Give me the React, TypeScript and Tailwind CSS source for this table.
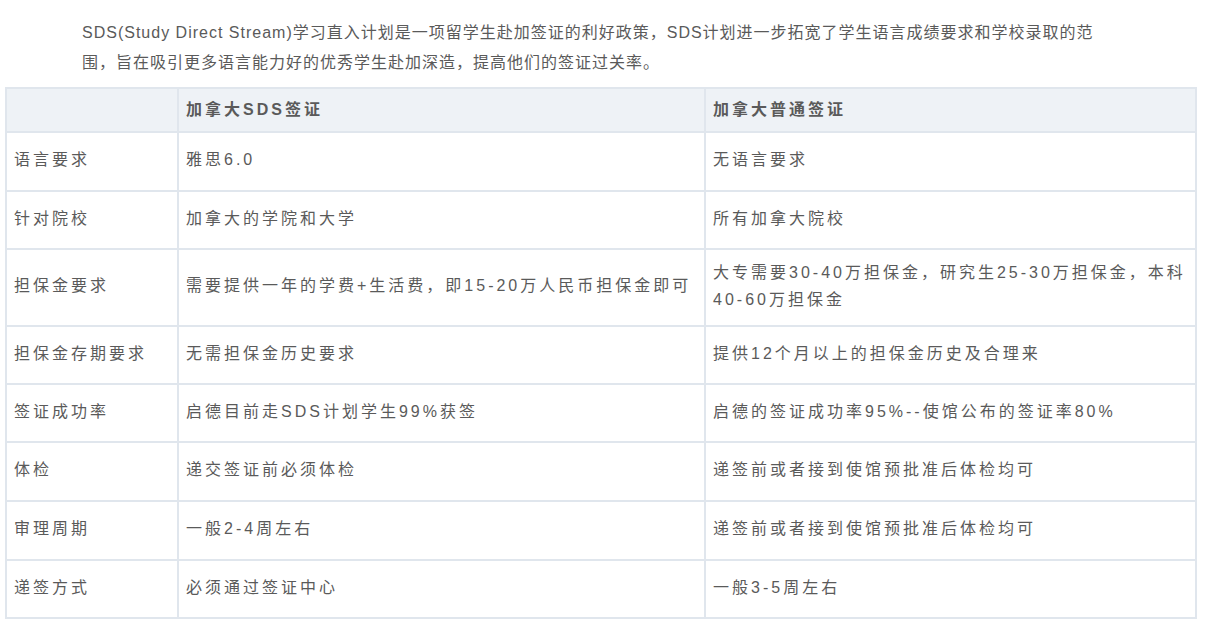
const rows: { label: string; sds: string; normal: string; h: string }[] = [
  { label: '语言要求', sds: '雅思6.0', normal: '无语言要求', h: 'h-[59px]' },
  { label: '针对院校', sds: '加拿大的学院和大学', normal: '所有加拿大院校', h: 'h-[58px]' },
  {
    label: '担保金要求',
    sds: '需要提供一年的学费+生活费，即15-20万人民币担保金即可',
    normal: '大专需要30-40万担保金，研究生25-30万担保金，本科40-60万担保金',
    h: 'h-[77px]',
  },
  { label: '担保金存期要求', sds: '无需担保金历史要求', normal: '提供12个月以上的担保金历史及合理来', h: 'h-[58px]' },
  { label: '签证成功率', sds: '启德目前走SDS计划学生99%获签', normal: '启德的签证成功率95%--使馆公布的签证率80%', h: 'h-[58px]' },
  { label: '体检', sds: '递交签证前必须体检', normal: '递签前或者接到使馆预批准后体检均可', h: 'h-[59px]' },
  { label: '审理周期', sds: '一般2-4周左右', normal: '递签前或者接到使馆预批准后体检均可', h: 'h-[59px]' },
  { label: '递签方式', sds: '必须通过签证中心', normal: '一般3-5周左右', h: 'h-[58px]' },
];

const cell = 'border-2 border-[#e0e6ed] px-[7px] pb-1 align-middle leading-[27px]';

export default function App() {
  return (
    <div className="min-h-screen w-[1205px] bg-white text-[#5a5a5a] font-['Liberation_Sans','Noto_Sans_CJK_SC',sans-serif] text-[16px]">
      <p className="ml-[82px] w-[1020px] pt-[18px] leading-[30px] tracking-[1px]">
        SDS(Study Direct Stream)学习直入计划是一项留学生赴加签证的利好政策，SDS计划进一步拓宽了学生语言成绩要求和学校录取的范围，旨在吸引更多语言能力好的优秀学生赴加深造，提高他们的签证过关率。
      </p>
      <table className="ml-[5px] mt-[9px] w-[1192px] border-collapse table-fixed tracking-[3px]">
        <colgroup>
          <col className="w-[172px]" />
          <col className="w-[527px]" />
          <col />
        </colgroup>
        <thead>
          <tr className="h-[44px] bg-[#eef2f6]">
            <th className="border-2 border-[#e0e6ed]"></th>
            <th className="border-2 border-[#e0e6ed] px-[7px] text-left font-bold">加拿大SDS签证</th>
            <th className="border-2 border-[#e0e6ed] px-[7px] text-left font-bold">加拿大普通签证</th>
          </tr>
        </thead>
        <tbody>
          {rows.map((r) => (
            <tr key={r.label} className={r.h}>
              <td className={cell}>{r.label}</td>
              <td className={cell}>{r.sds}</td>
              <td className={cell}>{r.normal}</td>
            </tr>
          ))}
        </tbody>
      </table>
    </div>
  );
}
